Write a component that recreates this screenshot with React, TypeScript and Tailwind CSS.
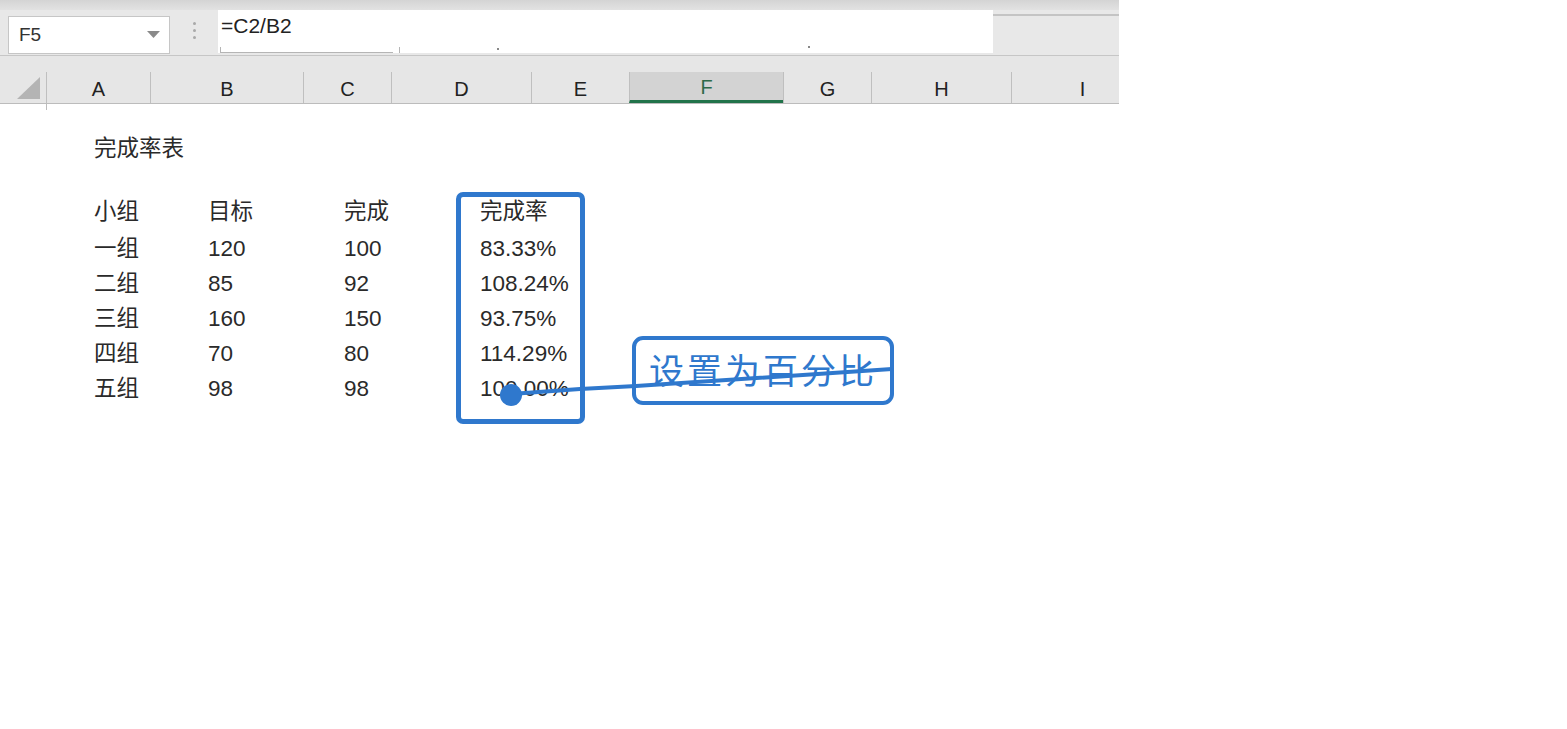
import React from "react";

const cols = [
  { name: "A", w: "w-[104px]" },
  { name: "B", w: "w-[153px]" },
  { name: "C", w: "w-[88px]" },
  { name: "D", w: "w-[140px]" },
  { name: "E", w: "w-[98px]" },
  { name: "F", w: "w-[154px]" },
  { name: "G", w: "w-[88px]" },
  { name: "H", w: "w-[140px]" },
  { name: "I", w: "w-[142px]" },
];

const rows = [
  ["小组", "目标", "完成", "完成率"],
  ["一组", "120", "100", "83.33%"],
  ["二组", "85", "92", "108.24%"],
  ["三组", "160", "150", "93.75%"],
  ["四组", "70", "80", "114.29%"],
  ["五组", "98", "98", "100.00%"],
];

const cellFont = { fontFamily: '"Liberation Sans", "Noto Sans CJK SC", sans-serif' };

const App = () => {
  return (
    <div className="relative w-[1567px] h-[729px] bg-white overflow-hidden text-[#222]" style={cellFont}>
      {/* excel chrome */}
      <div className="w-[1119px] overflow-hidden">
        <div className="h-[10px] bg-gradient-to-b from-[#d4d4d4] to-[#e2e2e2]"></div>
        <div className="flex h-[45px] bg-[#e8e8e8]">
          <div className="ml-[8px] mt-[6px] w-[162px] h-[38px] bg-white border border-[#c6c6c6] flex items-center justify-between pl-[10px] pr-[9px]">
            <span className="text-[19px] text-[#333]">F5</span>
            <svg width="13" height="8" viewBox="0 0 13 8"><path d="M0 0h13L6.5 7z" fill="#8a8a8a" /></svg>
          </div>
          <div className="w-[48px] flex flex-col items-center justify-center gap-[4px] pb-[4px]">
            <span className="w-[3px] h-[3px] rounded-full bg-[#a9a9a9]"></span>
            <span className="w-[3px] h-[3px] rounded-full bg-[#a9a9a9]"></span>
            <span className="w-[3px] h-[3px] rounded-full bg-[#a9a9a9]"></span>
          </div>
          <div className="relative w-[775px] h-[43px] bg-white">
            <span className="absolute left-[3px] top-[0px] text-[21px] text-[#222]">=C2/B2</span>
            <div className="absolute left-[2px] bottom-0 w-[173px] h-[6px] border-l border-b border-[#b5b5b5]"></div>
            <div className="absolute left-[181px] bottom-0 w-[8px] h-[6px] border-l border-[#b5b5b5]"></div>
            <div className="absolute left-[279px] bottom-[3px] w-[2px] h-[2px] bg-[#888]"></div>
            <div className="absolute left-[590px] bottom-[5px] w-[2px] h-[2px] bg-[#888]"></div>
          </div>
          <div className="flex-1 pt-[4px]">
            <div className="h-[2px] bg-[#c4c4c4]"></div>
          </div>
        </div>
        <div className="h-[1px] bg-[#c6c6c6]"></div>
        <div className="flex h-[48px] bg-[#e6e6e6] border-b border-[#bcbcbc]">
          <div className="w-[46px] flex-none flex items-end pb-[4px] pl-[17px]">
            <svg width="23" height="22" viewBox="0 0 23 22"><path d="M23 0v22H0z" fill="#b4b4b4" /></svg>
          </div>
          {cols.map((c) => (
            <div key={c.name} className={`${c.w} flex-none mt-[16px] pt-[2px] border-l border-[#bfbfbf] flex items-center justify-center text-[20px] ${c.name === "F" ? "bg-[#d3d3d3] border-b-[3px] border-b-[#21734a] text-[#2d6a48]" : "text-[#222]"}`}>
              {c.name}
            </div>
          ))}
        </div>
        <div className="ml-[46px] w-[1px] h-[6px] bg-[#bcbcbc]"></div>
      </div>

      {/* sheet cells */}
      <div className="pl-[94px] pt-[21px] text-[22.5px] text-[#2a2a2a]">
        <div className="h-[35px] flex items-center">完成率表</div>
        <div className="mt-[27px]">
          {rows.map((r, i) => (
            <div key={i} className={`flex items-center ${i === 0 ? "h-[38px]" : "h-[35px]"}`}>
              <div className="w-[114px]">{r[0]}</div>
              <div className="w-[136px]">{r[1]}</div>
              <div className="w-[136px]">{r[2]}</div>
              <div>{r[3]}</div>
            </div>
          ))}
        </div>
      </div>

      {/* annotation */}
      <div className="absolute left-[456px] top-[192px] w-[129px] h-[232px] border-[5px] border-[#2f78cd] rounded-[7px]"></div>
      <div className="absolute left-[632px] top-[336px] w-[262px] h-[69px] border-[4px] border-[#2f78cd] rounded-[11px] flex items-center pl-[13px] pt-[2px]">
        <span className="text-[35px] leading-none tracking-[3px] text-[#2f78cd] font-normal">设置为百分比</span>
      </div>
      <svg className="absolute left-0 top-0" width="1567" height="729" viewBox="0 0 1567 729">
        <path d="M511 394 L580 389 L636 386 L892 369" stroke="#2f78cd" strokeWidth="4" fill="none" />
        <circle cx="511" cy="395" r="11" fill="#2f78cd" />
      </svg>
    </div>
  );
};

export default App;
